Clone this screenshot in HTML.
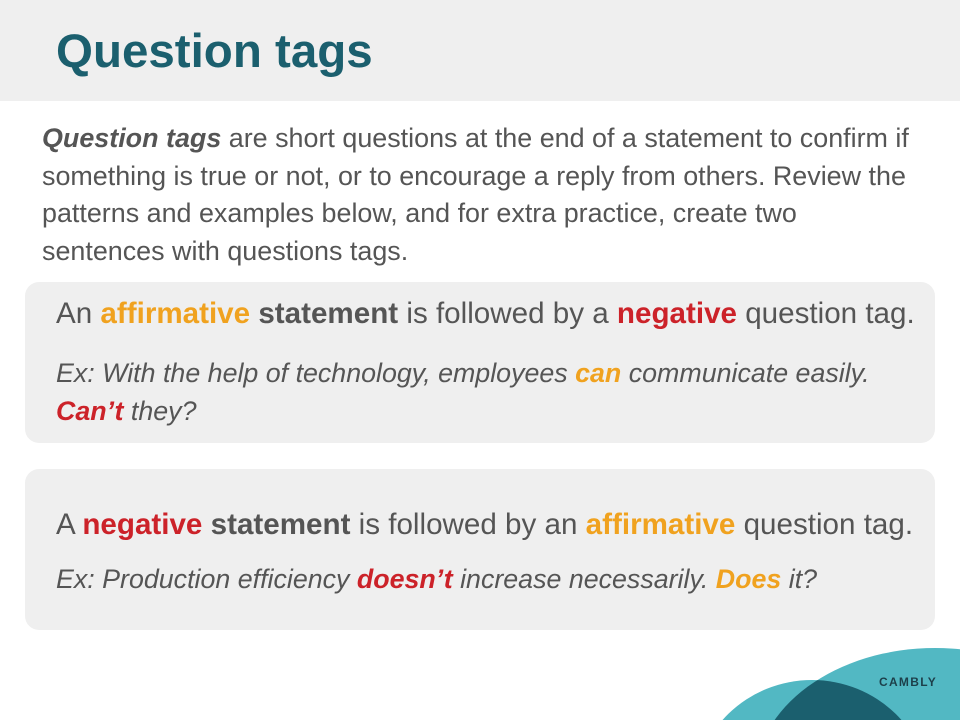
<!DOCTYPE html>
<html><head><style>
html,body{margin:0;width:960px;height:720px;overflow:hidden}
body{position:relative;background:#fff;font-family:"Liberation Sans",sans-serif;color:#555}
.hdr{position:absolute;left:0;top:0;width:960px;height:101px;background:#efefef}
.hdr h1{position:absolute;left:56px;top:24px;margin:0;font-size:47.5px;font-weight:bold;color:#1b5f6e}
.p{position:absolute;left:42px;top:120px;width:872px;font-size:26.9px;line-height:37.5px;color:#555}
.box{position:absolute;left:25px;width:910px;background:#efefef;border-radius:14px}
.h{position:absolute;left:31px;font-size:29.6px;white-space:nowrap;color:#555}
.ex{position:absolute;left:31px;font-size:26.8px;font-style:italic;line-height:37.5px;white-space:nowrap;color:#555}
.o{color:#f0a21f;font-weight:bold}.r{color:#cc2229;font-weight:bold}.b{font-weight:bold;color:#555}
</style></head><body>
<div class="hdr"><h1>Question tags</h1></div>
<div class="p"><b><i>Question tags</i></b> are short questions at the end of a statement to confirm if something is true or not, or to encourage a reply from others. Review the patterns and examples below, and for extra practice, create two sentences with questions tags.</div>
<div class="box" style="top:282px;height:161px">
<div class="h" style="top:15px">An <span class="o">affirmative</span> <span class="b">statement</span> is followed by a <span class="r">negative</span> question tag.</div>
<div class="ex" style="top:73px">Ex: With the help of technology, employees <span class="o">can</span> communicate easily.<br><span class="r">Can’t</span> they?</div>
</div>
<div class="box" style="top:469px;height:161px">
<div class="h" style="top:39px">A <span class="r">negative</span> <span class="b">statement</span> is followed by an <span class="o">affirmative</span> question tag.</div>
<div class="ex" style="top:92px">Ex: Production efficiency <span class="r">doesn’t</span> increase necessarily. <span class="o">Does</span> it?</div>
</div>
<svg style="position:absolute;left:0;top:0" width="960" height="720">
<defs><clipPath id="c"><ellipse cx="935" cy="780" rx="180" ry="132"/></clipPath></defs>
<ellipse cx="935" cy="780" rx="180" ry="132" fill="#52b8c3"/>
<ellipse cx="812" cy="795" rx="118" ry="115" fill="#52b8c3"/>
<ellipse cx="812" cy="795" rx="118" ry="115" fill="#1b5f6e" clip-path="url(#c)"/>
<text x="879" y="686" font-family="Liberation Sans" font-weight="bold" font-size="12" letter-spacing="1.3" fill="#1d3f4a">CAMBLY</text>
</svg>
</body></html>
